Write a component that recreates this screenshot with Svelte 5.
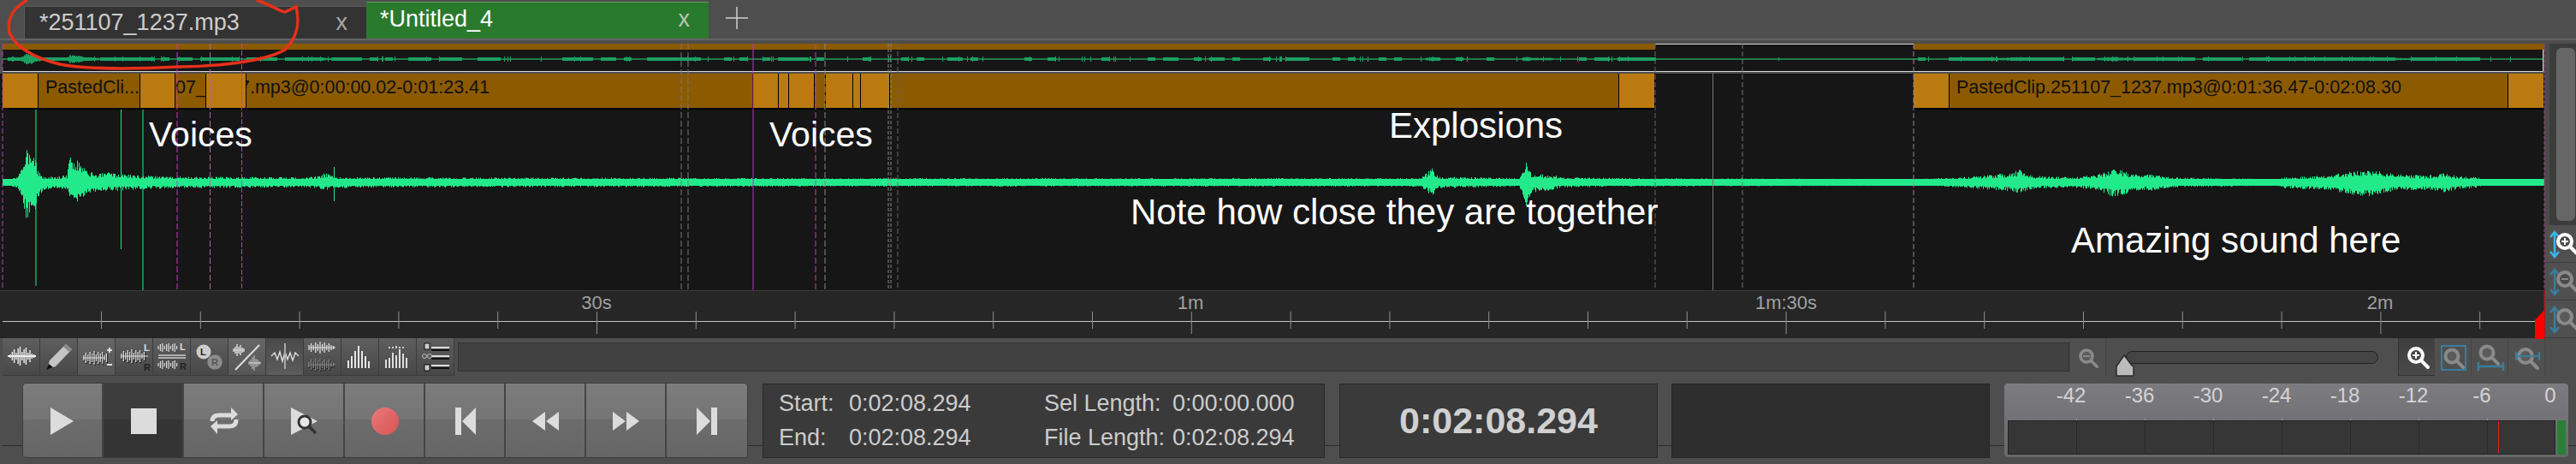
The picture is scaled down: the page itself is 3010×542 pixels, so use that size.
<script>
  // little seeded generator so the waveform comes out the same every time
  let seed = 1237;
  function rnd() {
    seed = (seed * 16807) % 2147483647;
    return seed / 2147483647;
  }

  // [x, amplitude up, amplitude down] along the main waveform
  const env = [
    [3,1,1],[8,3,3],[20,7,7],[25,16,16],[30,42,42],[38,36,44],[44,16,20],[50,7,9],[70,7,7],[78,9,9],
    [81,30,20],[92,26,24],[100,14,14],[115,10,10],[122,13,10],[135,10,10],[170,8,8],[200,7,7],[360,6,6],
    [372,9,8],[380,11,9],[395,6,7],[430,6,6],[1000,5,5],[1660,5,5],[1673,18,17],[1680,7,7],[1775,5,5],
    [1783,20,30],[1790,10,12],[1815,9,9],[1825,6,6],[1900,5,5],[2236,4,4],[2290,6,6],[2328,9,9],
    [2345,11,10],[2361,15,13],[2375,8,8],[2420,6,6],[2450,9,9],[2470,17,18],[2490,10,12],[2520,9,9],
    [2535,6,6],[2660,4,4],[2670,6,7],[2720,8,9],[2740,12,13],[2765,15,17],[2800,10,10],[2835,8,9],
    [2853,11,12],[2875,7,8],[2892,7,7],[2900,4,4],[2973,4,4]
  ];

  function at(x) {
    for (let i = 1; i < env.length; i++) {
      if (x <= env[i][0]) {
        const a = env[i - 1], b = env[i];
        const t = (x - a[0]) / (b[0] - a[0]);
        return [a[1] + (b[1] - a[1]) * t, a[2] + (b[2] - a[2]) * t];
      }
    }
    return [4, 4];
  }

  let wavePath = '';
  for (let x = 3; x < 2973; x++) {
    const [u, d] = at(x);
    const up = Math.max(4, u * (0.5 + 0.5 * rnd()));
    const dn = Math.max(4, d * (0.5 + 0.5 * rnd()));
    wavePath += `M${x + 0.5} ${(85 - up).toFixed(1)}V${(85 + dn).toFixed(1)}`;
  }
  wavePath += 'M1783.5 62V112M390.5 67V107';

  // overview strip: thin line with runs of slightly thicker signal
  function density(x) {
    if (x < 180) return 0.9;
    if (x < 1000) return 0.6;
    if (x < 1934) return 0.3;
    if (x < 2236) return 0.03;
    if (x < 2892) return 0.75;
    return 0;
  }
  let overPath = '';
  let on = false;
  for (let x = 3; x < 2963; x++) {
    if (x % 9 === 0) on = rnd() < density(x);
    const [u] = at(x);
    const loud = u > 9 ? u * 0.16 : 0;
    let a = on ? 2 : 0;
    if (rnd() < 0.06) a = 3;
    a = Math.max(a, loud * (0.6 + 0.4 * rnd()));
    if (x > 1934 && x < 2236 && rnd() < 0.97) a = 0;
    if (a > 0) overPath += `M${x + 0.5} ${(18 - a).toFixed(1)}V${(18 + a).toFixed(1)}`;
  }

  const clips = [
    [3,45,'l'],[45,164,'d','PastedCli...','name'],[164,205,'l'],[205,241,'d','07_','tight'],[241,288,'l'],
    [288,880,'d','7.mp3@0:00:00.02-0:01:23.41','cut'],[880,910,'l'],[910,922,'l'],[922,952,'l'],[952,965,'d'],
    [965,997,'l'],[997,1006,'l'],[1006,1040,'l'],[1040,1892,'d'],[1892,1934,'l'],[1934,2236,'gap'],
    [2236,2278,'l'],[2278,2931,'d','PastedClip.251107_1237.mp3@0:01:36.47-0:02:08.30','name'],[2931,2973,'l']
  ];

  const markers = [
    [3,'#c23ac2','6 3'],[207,'#c23ac2','7 3'],[245.5,'#a86aa8','7 3'],[282.5,'#c23ac2','6 2'],[796,'#777','7 3'],
    [804,'#777','7 3'],[880,'#b636b6',''],[953,'#c23ac2','7 3'],[964,'#888','7 3'],[1038,'#888','4 2'],
    [1041,'#888','4 2'],[1049,'#666','6 3'],[1934,'#666','6 3'],[2036,'#777','6 3'],[2236,'#a080a0','6 3']
  ];
  const spikes = [[42,77,283],[141.5,77,240],[167,77,288]];

  const ticks = [];
  for (let k = 0; k < 25; k++) ticks.push({ x: 118.5 + 115.8 * k, major: k % 6 === 5 });
  const labels = [[697,'30s'],[1391,'1m'],[2087,'1m:30s'],[2781,'2m']];

  const meterLabels = ['-42','-36','-30','-24','-18','-12','-6','0'];

  // vertical bars path for the small toolbar wave icons
  function bars(x0, cy, step, hs) {
    return hs.map((h, i) => `M${x0 + i * step} ${cy - h}V${cy + h}`).join('');
  }
  function cols(x0, base, step, hs) {
    return hs.map((h, i) => `M${x0 + i * step} ${base}V${base - h}`).join('');
  }
  const w1 = [2,5,8,4,9,11,5,8,10,4,7,3,2];
  const w2 = [3,6,4,7,5,8,4,7,5,7,3,5];
</script>

{#snippet mag(cx, cy, r, sw, stroke, fill, sign)}
  <circle {cx} {cy} {r} fill={fill} stroke={stroke} stroke-width={sw} />
  <path d="M{cx + r * 0.75} {cy + r * 0.75}L{cx + r * 1.75} {cy + r * 1.75}" stroke={stroke} stroke-width={sw} stroke-linecap="round" />
  {#if sign === '+'}
    <path d="M{cx - 4} {cy}H{cx + 4}M{cx} {cy - 4}V{cy + 4}" stroke={stroke} stroke-width="2" />
  {:else if sign === '-'}
    <path d="M{cx - 4} {cy}H{cx + 4}" stroke={stroke} stroke-width="2" />
  {/if}
{/snippet}

{#snippet varrow(color)}
  <path d="M11 9V36M6 14L11 8L16 14M6 31L11 37L16 31" fill="none" stroke={color} stroke-width="2.5" />
{/snippet}

<main class="app">
  <div class="tabs">
    <div class="tab off"><span>*251107_1237.mp3</span><i>x</i></div>
    <div class="tab on"><span>*Untitled_4</span><i>x</i></div>
    <svg class="plus" width="26" height="26"><path d="M13 0V26M0 13H26" stroke="#d0d0d0" stroke-width="1.5" /></svg>
  </div>

  <div class="workspace">
    <div class="editor">
      <svg class="overview" width="2973" height="35">
        <rect x="3" y="0" width="1931" height="7" fill="#8c5a00" />
        <rect x="2236" y="0" width="737" height="7" fill="#8c5a00" />
        <rect x="3" y="7" width="2968" height="25" fill="#161616" />
        <rect x="1934" y="0" width="302" height="7" fill="#161616" />
        <rect x="3" y="17" width="2968" height="2" fill="#1d7a4b" />
        <path d={overPath} stroke="#1ba062" stroke-width="1" />
        <path d="M1934 0.5H2236" stroke="#d8d8d8" />
        <path d="M3 32.5H2971.5V7" fill="none" stroke="#d8d8d8" />
      </svg>

      <div class="clips">
        {#each clips as c}
          <div class="seg {c[2]}" style="width:{c[1] - c[0]}px">
            {#if c[3]}<span class={c[4]}>{c[3]}</span>{/if}
          </div>
        {/each}
      </div>

      <svg class="wave" width="2973" height="211">
        <path d={wavePath} stroke="#22ea8b" stroke-width="1" />
      </svg>

      <div class="ruler">
        <svg width="2973" height="56">
          <path d="M3 35.5H2962" stroke="#c4c4c4" />
          {#each ticks as t}
            <path d="M{t.x} 24V{t.major ? 50 : 44}" stroke="#8f8f8f" />
          {/each}
          <polygon points="2962,34 2973,22 2973,56 2962,56" fill="#ff0000" />
        </svg>
        {#each labels as l}
          <span class="tick-label" style="left:{l[0]}px">{l[1]}</span>
        {/each}
      </div>

      <svg class="markers" width="2974" height="344">
        {#each markers as m}
          <path d="M{m[0]} 0V288" stroke={m[1]} stroke-dasharray={m[2]} />
        {/each}
        <path d="M2001.5 35V288" stroke="#777" />
        <path d="M2973 0V288" stroke="#b03a8a" stroke-dasharray="4 2" />
        <path d="M2973 288V344" stroke="#ff0000" />
        {#each spikes as s}
          <path d="M{s[0]} {s[1]}V{s[2]}" stroke="#22ea8b" />
        {/each}
      </svg>

      <span class="note" style="left:174px;top:86px">Voices</span>
      <span class="note" style="left:899px;top:86px">Voices</span>
      <span class="note wide" style="left:1623px;top:75px">Explosions</span>
      <span class="note wide" style="left:1321px;top:176px">Note how close they are together</span>
      <span class="note wide" style="left:2420px;top:209px">Amazing sound here</span>
    </div>

    <div class="side">
      <div class="track"><div class="thumb"></div></div>
      <button class="side-btn">
        <svg width="37" height="44">{@render varrow('#3fb4ea')}{@render mag(23, 19, 8, 4, '#fff', '#4a4a4a', '+')}</svg>
      </button>
      <button class="side-btn">
        <svg width="37" height="44">{@render varrow('#3a7d9c')}{@render mag(23, 19, 8, 4, '#8a8a8a', '#4a4a4a', '-')}</svg>
      </button>
      <button class="side-btn">
        <svg width="37" height="44">{@render varrow('#3a7d9c')}{@render mag(23, 19, 8, 4, '#8a8a8a', '#5a5a5a', '')}</svg>
      </button>
    </div>
  </div>

  <div class="toolbar">
    <div class="tools">
      <button class="tool"><svg width="44" height="43"><path d={bars(9, 21, 2.3, w1)} stroke="#eee" stroke-width="1.4" /><path d="M6 21H39" stroke="#eee" stroke-width="2" /></svg></button>
      <button class="tool">
        <svg width="44" height="43">
          <polygon points="8,36 11,26 30,7 37,13 18,33" fill="#c4c4c4" />
          <path d="M30 7L37 13L34 16L27 10Z" fill="#8a8a8a" />
          <polygon points="7,37 10,30 15,34" fill="#111" />
        </svg>
      </button>
      <button class="tool lit"><svg width="44" height="43"><path d={bars(7, 23, 2.4, w2)} stroke="#111" stroke-width="1.3" transform="translate(0.8 1)" /><path d={bars(7, 23, 2.4, w2)} stroke="#ddd" stroke-width="1.3" /><path d="M6 23H32" stroke="#ddd" /><path d="M34 14H40M37 11V17M34 31H40" stroke="#ddd" stroke-width="2" /></svg></button>
      <button class="tool"><svg width="44" height="43"><path d={bars(7, 21, 2.4, w2)} stroke="#111" stroke-width="1.3" transform="translate(0.8 1)" /><path d={bars(7, 21, 2.4, w2)} stroke="#ddd" stroke-width="1.3" /><path d="M6 21H38" stroke="#ddd" /><text class="lr" x="33" y="15">L</text><text class="lr dark" x="33" y="38">R</text></svg></button>
      <button class="tool"><svg width="44" height="43"><path d={bars(6, 11, 2.4, [2,4,5,2,4,5,2,4,5,2])} stroke="#ddd" stroke-width="1.2" /><path d={bars(6, 31, 2.4, [2,4,5,2,4,5,2,4,5,2])} stroke="#ddd" stroke-width="1.2" /><path d="M6 20H38M6 23H38" stroke="#ccc" stroke-width="1.5" /><text class="lr" x="31" y="14">L</text><text class="lr dark" x="31" y="37">R</text></svg></button>
      <button class="tool">
        <svg width="44" height="43">
          <circle cx="15" cy="16" r="8.5" fill="#ccc" />
          <circle cx="28" cy="28" r="9" fill="#8c8c8c" stroke="#444" stroke-width="0.5" />
          <text class="lr dark" x="11" y="20">L</text>
          <text class="lr mid" x="24" y="32">R</text>
        </svg>
      </button>
      <button class="tool lit">
        <svg width="44" height="43">
          <path d={bars(6, 14, 2, [2,4,7,4,6,3,2])} stroke="#ddd" stroke-width="1.4" />
          <path d={bars(24, 29, 2, [2,4,7,9,5,4,2])} stroke="#aaa" stroke-width="1.4" />
          <path d="M6 14H18M24 29H38" stroke="#ddd" />
          <path d="M8 37L36 8" stroke="#ddd" stroke-width="2" />
        </svg>
      </button>
      <button class="tool sunk"><svg width="44" height="43"><path d="M6 21L10 17L13 25L16 16L19 27L22 16L25 25L28 17L31 26L34 17L38 21" fill="none" stroke="#ddd" stroke-width="1.4" /><path d="M22 6V36" stroke="#aaa" stroke-width="2" /></svg></button>
      <button class="tool"><svg width="44" height="43"><path d={bars(6, 11, 2.6, [3,5,3,6,4,7,4,6,3,5,3,2])} stroke="#ddd" stroke-width="1.3" /><path d={bars(6, 31, 2.6, [3,6,4,7,5,7,4,6,4,6,3,2])} stroke="#111" stroke-width="1.3" transform="translate(0.8 1)" /><path d={bars(6, 31, 2.6, [3,6,4,7,5,7,4,6,4,6,3,2])} stroke="#888" stroke-width="1.3" /><path d="M6 11H37" stroke="#ddd" /><path d="M6 31H37" stroke="#888" /></svg></button>
      <button class="tool"><svg width="44" height="43"><path d={cols(8, 35, 4, [9,14,20,26,20,14,8])} stroke="#e4e4e4" stroke-width="2" /></svg></button>
      <button class="tool"><svg width="44" height="43"><path d={cols(8, 35, 4, [10,12,18,15,22,17,12])} stroke="#ddd" stroke-width="2" /><path d={cols(8, 19, 4, [0,2,2,3,2,2,0])} stroke="#ccc" stroke-width="2" transform="translate(0 -7)" /></svg></button>
      <button class="tool">
        <svg width="44" height="43">
          <path d="M17 11H38M17 21H38M17 32H38" stroke="#ddd" stroke-width="2" />
          <path d="M17 14H38M17 24H38M17 35H38" stroke="#111" stroke-width="2" />
          <rect x="9" y="6" width="6" height="7" fill="#ccc" stroke="#111" />
          <rect x="9" y="31" width="6" height="7" fill="#ccc" stroke="#111" />
          <circle cx="9" cy="21" r="2.5" fill="none" stroke="#bbb" />
          <circle cx="15" cy="21" r="2.5" fill="none" stroke="#bbb" />
        </svg>
      </button>
    </div>

    <div class="scrollbox"></div>

    <button class="zoom-btn out"><svg width="43" height="43">{@render mag(19, 20, 7, 3.5, '#8a8a8a', '#5a5a5a', '-')}</svg></button>
    <div class="slider">
      <div class="slider-track"></div>
      <svg class="slider-thumb" width="23" height="26"><polygon points="11,1 20,13 22,14 22,25 2,25 2,14" fill="#bcbcbc" stroke="#2b2b2b" stroke-width="1.5" /></svg>
    </div>
    <button class="zoom-btn active"><svg width="43" height="43">{@render mag(20, 20, 8, 4, '#fff', '#444', '+')}</svg></button>
    <button class="zoom-btn"><svg width="44" height="43"><rect x="8" y="8" width="28" height="28" fill="none" stroke="#3a7d9c" stroke-width="2" />{@render mag(20, 20, 7.5, 4, '#8a8a8a', '#5a5a5a', '')}</svg></button>
    <button class="zoom-btn"><svg width="42" height="43"><path d="M8 27V37M37 27V37M8 32H37" fill="none" stroke="#3a7d9c" stroke-width="2.5" />{@render mag(18, 16, 7.5, 4, '#8a8a8a', '#5a5a5a', '')}</svg></button>
    <button class="zoom-btn"><svg width="43" height="43">{@render mag(20, 20, 8, 4, '#8a8a8a', '#5a5a5a', '')}<path d="M9 15V25M36 15V25M9 20H36" fill="none" stroke="#3a7d9c" stroke-width="2" /></svg></button>
  </div>

  <div class="bottom">
    <div class="transport">
      <button class="tbtn"><svg width="94" height="86"><polygon points="32,28 59,44 32,60" /></svg></button>
      <button class="tbtn stop"><svg width="94" height="86"><rect x="32" y="29" width="30" height="30" /></svg></button>
      <button class="tbtn">
        <svg width="94" height="86">
          <path class="ln" d="M33 44Q33 37 41 37H56" />
          <polygon points="55,28 63,36 55,43" />
          <path class="ln" d="M61 42Q61 50 53 50H38" />
          <polygon points="39,43 31,50 39,59" />
        </svg>
      </button>
      <button class="tbtn">
        <svg width="94" height="86">
          <polygon points="31,28 62,44 31,60" />
          <circle cx="47" cy="45" r="7" fill="#e6e6e6" stroke="#333" stroke-width="3" />
          <path d="M52 50L60 58" stroke="#333" stroke-width="3.5" />
        </svg>
      </button>
      <button class="tbtn">
        <svg width="94" height="86">
          <defs><linearGradient id="rec" x1="0" y1="0" x2="1" y2="1"><stop offset="0" stop-color="#e87a7a" /><stop offset="1" stop-color="#d95252" /></linearGradient></defs>
          <circle cx="47" cy="44" r="16" fill="url(#rec)" />
        </svg>
      </button>
      <button class="tbtn"><svg width="94" height="86"><rect x="35" y="28" width="7" height="32" /><polygon points="59,28 43,44 59,60" /></svg></button>
      <button class="tbtn"><svg width="94" height="86"><polygon points="46,33 31,44 46,55" /><polygon points="62,33 47,44 62,55" /></svg></button>
      <button class="tbtn"><svg width="94" height="86"><polygon points="31,33 46,44 31,55" /><polygon points="47,33 62,44 47,55" /></svg></button>
      <button class="tbtn"><svg width="94" height="86"><polygon points="35,28 51,44 35,60" /><rect x="52" y="28" width="7" height="32" /></svg></button>
    </div>

    <div class="info">
      <span>Start:</span><span>0:02:08.294</span><span>Sel Length:</span><span>0:00:00.000</span>
      <span>End:</span><span>0:02:08.294</span><span>File Length:</span><span>0:02:08.294</span>
    </div>

    <div class="clock">0:02:08.294</div>
    <div class="blank"></div>

    <div class="meter">
      <div class="scale">
        {#each meterLabels as l}<span>{l}</span>{/each}
      </div>
      <div class="bar-row">
        <div class="bar">
          {#each meterLabels.slice(0, 7) as l}<i class="cell"></i>{/each}
          <b class="peak"></b>
        </div>
        <div class="level"></div>
      </div>
    </div>
  </div>

  <svg class="ring" width="360" height="90">
    <path d="M300 0C322 8 328 14 333 14L346 8C350 25 349 42 333 58C310 72 250 78 210 78C150 81 100 81 70 75C40 68 18 55 11 38C8 24 14 10 32 0" fill="none" stroke="#e8301a" stroke-width="3.5" />
  </svg>
</main>

<style>
  :global(body) {
    margin: 0;
    background: #4e4e4e;
  }
  .app {
    position: relative;
    width: 3010px;
    height: 542px;
    overflow: hidden;
    background: #4e4e4e;
    font-family: "Liberation Sans", Arial, sans-serif;
  }
  svg {
    display: block;
  }
  button {
    padding: 0;
    margin: 0;
    border: none;
    background: none;
  }

  .tabs {
    display: flex;
    align-items: flex-end;
    height: 45px;
    padding-left: 28px;
    border-bottom: 2px solid #646464;
    margin-bottom: 4px;
  }
  .tab {
    box-sizing: border-box;
    width: 400px;
    display: flex;
    align-items: center;
    justify-content: space-between;
    font-size: 27px;
  }
  .tab.off {
    height: 38px;
    background: #333;
    color: #ccc;
    padding: 0 22px 0 17px;
    border-top: 1px solid #5a5a5a;
    border-left: 1px solid #5a5a5a;
  }
  .tab.on {
    height: 43px;
    background: #2a7a2e;
    color: #fff;
    padding: 0 22px 4px 16px;
    border-top: 1px solid #5f9a5f;
  }
  .tab i {
    font-style: normal;
    font-weight: 400;
    color: #a8a8a8;
  }
  .tab.on i {
    color: #b5c8b5;
  }
  .plus {
    margin: 0 0 11px 20px;
  }

  .workspace {
    display: flex;
    height: 344px;
  }
  .editor {
    position: relative;
    width: 2973px;
    background: #4e4e4e;
  }
  .clips {
    display: flex;
    height: 42px;
    padding-left: 3px;
    background: #161616;
    width: 2970px;
  }
  .seg {
    box-sizing: border-box;
    flex: none;
    height: 100%;
    overflow: hidden;
    white-space: nowrap;
    border-right: 1px solid #000;
    border-bottom: 2px solid #000;
    font-size: 21.5px;
    line-height: 32px;
    color: #111;
  }
  .seg.l { background: #bb7a10; }
  .seg.d { background: #8c5a00; }
  .seg.gap { background: #161616; border: none; }
  .seg .name { margin-left: 8px; }
  .seg .cut { margin-left: -8px; }
  .wave {
    background: #161616;
  }
  .ruler {
    position: relative;
    height: 56px;
    background: #262626;
    border-top: 1px solid #3c3c3c;
    box-sizing: border-box;
  }
  .tick-label {
    position: absolute;
    top: 2px;
    transform: translateX(-50%);
    font-size: 22px;
    line-height: 24px;
    color: #a0a0a0;
  }
  .markers {
    position: absolute;
    left: 0;
    top: 0;
    pointer-events: none;
  }
  .note {
    position: absolute;
    font-size: 41px;
    line-height: 1;
    color: #fff;
    white-space: nowrap;
  }
  .note.wide {
    font-size: 42px;
  }

  .side {
    flex: 1;
    display: flex;
    flex-direction: column;
    background: #4a4a4a;
  }
  .track {
    box-sizing: border-box;
    height: 212px;
    margin-left: 6px;
    padding: 5px 2px 5px 8px;
    background: #3c3c3c;
  }
  .thumb {
    height: 100%;
    background: #666;
    border-radius: 6px;
  }
  .side-btn {
    display: block;
    width: 100%;
    height: 44px;
    background: #505050;
    border-bottom: 1px solid #3a3a3a;
    border-left: 1px solid #3a3a3a;
    overflow: hidden;
  }

  .toolbar {
    display: flex;
    height: 44px;
    padding-left: 3px;
  }
  .tools {
    display: flex;
  }
  .tool {
    width: 44px;
    height: 44px;
    box-sizing: border-box;
    border-right: 1px solid #3c3c3c;
    border-bottom: 1px solid #3c3c3c;
    background: linear-gradient(#5e5e5e, #484848);
  }
  .tool.lit {
    background: linear-gradient(#666, #565656);
  }
  .tool.sunk {
    background: linear-gradient(#4a4a4a, #5c5c5c);
  }
  .lr {
    font-size: 11px;
    font-weight: 700;
    fill: #ddd;
  }
  .lr.dark { fill: #222; }
  .lr.mid { fill: #555; }
  .scrollbox {
    box-sizing: border-box;
    flex: none;
    width: 1883px;
    height: 34px;
    margin: 5px 0 0 4px;
    background: #414141;
    border: 1px solid #333;
  }
  .zoom-btn {
    flex: none;
    height: 44px;
    width: 43px;
    background: #505050;
    border-right: 1px solid #454545;
    box-sizing: border-box;
  }
  .zoom-btn.out {
    width: 43px;
    border-left: 1px solid #454545;
  }
  .zoom-btn.active {
    background: linear-gradient(#3e3e3e, #4a4a4a);
    border-left: 1px solid #333;
    border-bottom: 1px solid #333;
  }
  .slider {
    position: relative;
    flex: none;
    width: 341px;
  }
  .slider-track {
    box-sizing: border-box;
    position: absolute;
    left: 23px;
    top: 15px;
    width: 295px;
    height: 15px;
    background: #444;
    border: 1px solid #222;
    border-radius: 8px;
  }
  .slider-thumb {
    position: absolute;
    left: 10px;
    top: 19px;
  }

  .bottom {
    position: relative;
    display: flex;
    padding: 9px 0 0 27px;
  }
  .bottom::before {
    content: '';
    position: absolute;
    left: 3px;
    right: 0;
    top: 81px;
    height: 1px;
    background: #2b2b2b;
  }
  .transport {
    position: relative;
    flex: none;
    display: flex;
    height: 86px;
    width: 846px;
    border-radius: 4px;
    overflow: hidden;
    box-shadow: 0 0 0 1px #3c3c3c;
  }
  .tbtn {
    flex: 1 1 0;
    min-width: 0;
    position: relative;
    background: linear-gradient(#7c7c7c, #757575 49%, #6c6c6c 49%, #666);
    box-shadow: inset -2px 0 #454545;
  }
  .tbtn:last-child {
    box-shadow: none;
  }
  .tbtn.stop {
    background: linear-gradient(#3c3c3c 49%, #343434 49%);
  }
  .tbtn polygon,
  .tbtn rect {
    fill: #dcdcdc;
  }
  .ln {
    fill: none;
    stroke: #dcdcdc;
    stroke-width: 5;
  }
  .info {
    position: relative;
    box-sizing: border-box;
    display: grid;
    grid-template-columns: 82px 228px 150px 1fr;
    align-items: center;
    width: 657px;
    height: 87px;
    margin-left: 18px;
    padding: 2px 0 2px 18px;
    background: #3a3a3a;
    border: 1px solid #2a2a2a;
    font-size: 27px;
    color: #ccc;
  }
  .clock {
    position: relative;
    box-sizing: border-box;
    width: 372px;
    height: 87px;
    margin-left: 17px;
    display: flex;
    align-items: center;
    justify-content: center;
    background: #3a3a3a;
    border: 1px solid #2a2a2a;
    font-size: 43px;
    font-weight: 700;
    color: #d0d0d0;
  }
  .blank {
    position: relative;
    box-sizing: border-box;
    width: 372px;
    height: 87px;
    margin-left: 16px;
    background: #2e2e2e;
    border: 1px solid #262626;
  }
  .meter {
    position: relative;
    box-sizing: border-box;
    width: 659px;
    height: 86px;
    margin-left: 17px;
    padding: 0 3px 4px 4px;
    border-radius: 4px;
    background: linear-gradient(#7c7c80, #68686c);
  }
  .scale {
    display: flex;
    height: 43px;
    padding-left: 34px;
    font-size: 24px;
    line-height: 28px;
    color: #d4d4d4;
  }
  .scale span {
    flex: none;
    width: 80px;
    text-align: center;
  }
  .bar-row {
    display: flex;
    gap: 2px;
    height: 40px;
  }
  .bar {
    position: relative;
    box-sizing: border-box;
    display: flex;
    width: 640px;
    background: #363636;
    border: 1px solid #222;
  }
  .cell {
    position: relative;
    width: 80px;
    border-right: 1px solid #2a2a2a;
    box-sizing: border-box;
  }
  .cell::after {
    content: '';
    position: absolute;
    right: -1px;
    top: -3px;
    width: 1px;
    height: 2px;
    background: #999;
  }
  .peak {
    position: absolute;
    left: 572px;
    top: 0;
    bottom: 0;
    width: 1px;
    background: #e02020;
  }
  .level {
    width: 10px;
    background: #2a7f36;
  }
  .ring {
    position: absolute;
    left: 0;
    top: 0;
    pointer-events: none;
  }
</style>
